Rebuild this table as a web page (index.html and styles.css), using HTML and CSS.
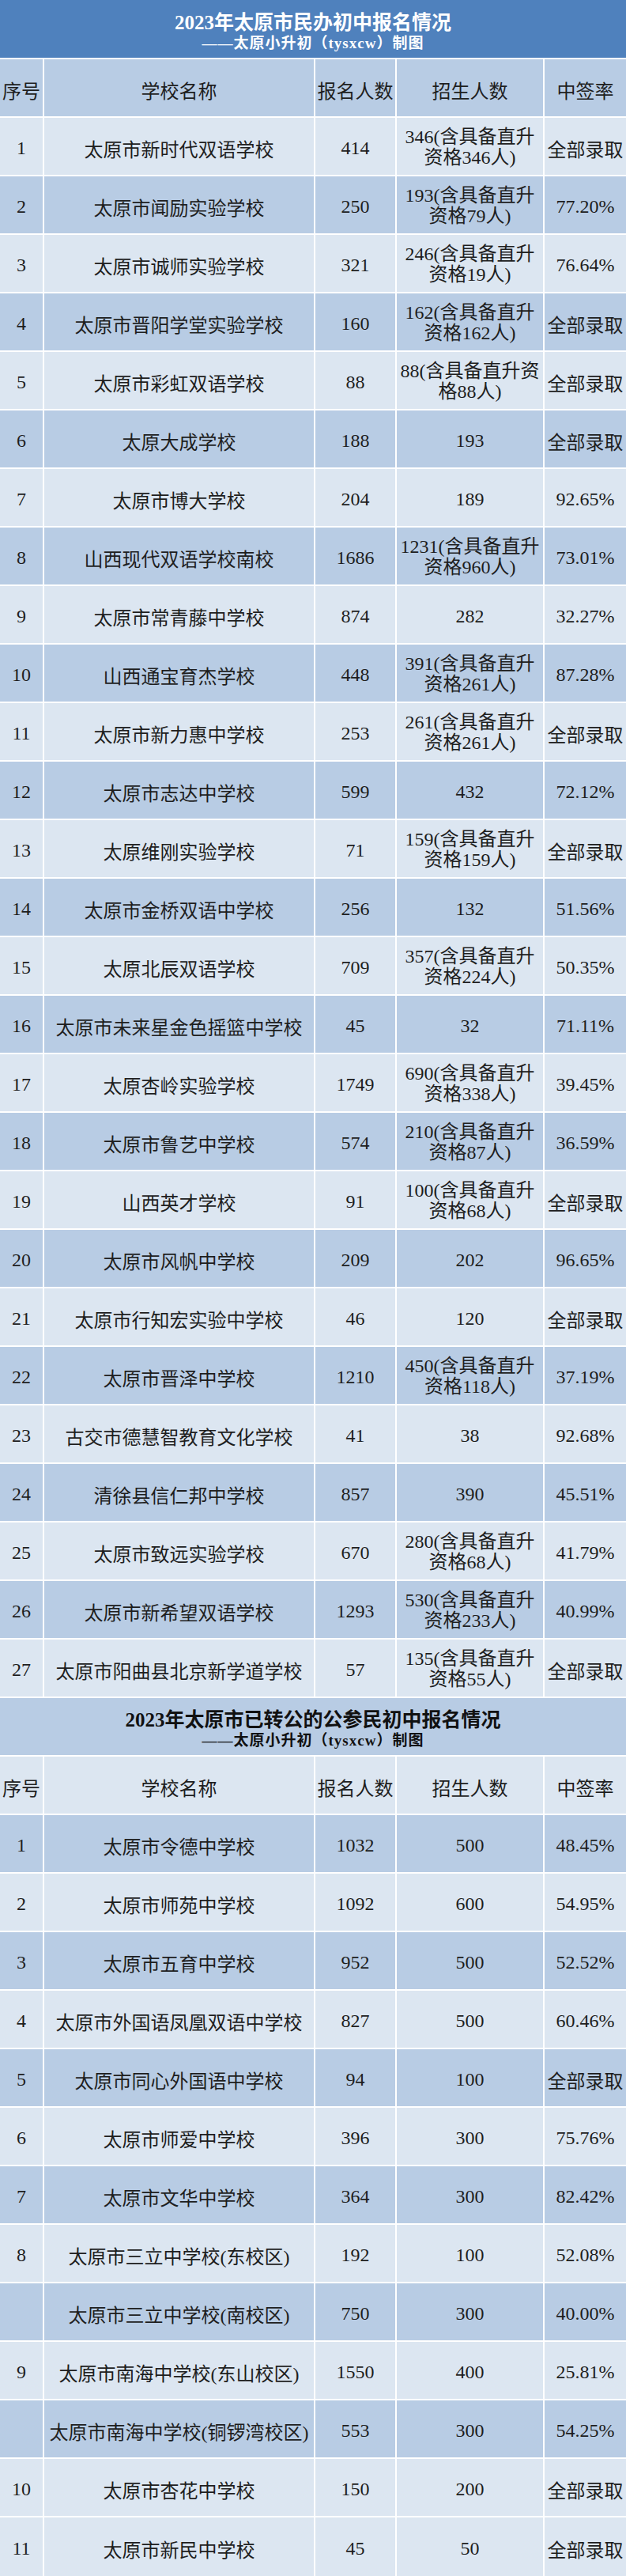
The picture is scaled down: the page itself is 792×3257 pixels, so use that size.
FILE: index.html
```html
<!DOCTYPE html>
<html lang="zh-CN">
<head>
<meta charset="utf-8">
<title>2023年太原市民办初中报名情况</title>
<link rel="stylesheet" href="styles.css">
</head>
<body>
<div class="page">
  <section class="sheet">
    <div class="title title--dark">
      <div class="title-main">2023年太原市民办初中报名情况</div>
      <div class="title-sub">——太原小升初（tysxcw）制图</div>
    </div>
    <div class="row row--dark head"><div>序号</div><div>学校名称</div><div>报名人数</div><div>招生人数</div><div>中签率</div></div>
    <div class="row row--light"><div>1</div><div>太原市新时代双语学校</div><div>414</div><div class="two">346(含具备直升<br>资格346人)</div><div>全部录取</div></div>
    <div class="row row--dark"><div>2</div><div>太原市闻励实验学校</div><div>250</div><div class="two">193(含具备直升<br>资格79人)</div><div>77.20%</div></div>
    <div class="row row--light"><div>3</div><div>太原市诚师实验学校</div><div>321</div><div class="two">246(含具备直升<br>资格19人)</div><div>76.64%</div></div>
    <div class="row row--dark"><div>4</div><div>太原市晋阳学堂实验学校</div><div>160</div><div class="two">162(含具备直升<br>资格162人)</div><div>全部录取</div></div>
    <div class="row row--light"><div>5</div><div>太原市彩虹双语学校</div><div>88</div><div class="two">88(含具备直升资<br>格88人)</div><div>全部录取</div></div>
    <div class="row row--dark"><div>6</div><div>太原大成学校</div><div>188</div><div>193</div><div>全部录取</div></div>
    <div class="row row--light"><div>7</div><div>太原市博大学校</div><div>204</div><div>189</div><div>92.65%</div></div>
    <div class="row row--dark"><div>8</div><div>山西现代双语学校南校</div><div>1686</div><div class="two">1231(含具备直升<br>资格960人)</div><div>73.01%</div></div>
    <div class="row row--light"><div>9</div><div>太原市常青藤中学校</div><div>874</div><div>282</div><div>32.27%</div></div>
    <div class="row row--dark"><div>10</div><div>山西通宝育杰学校</div><div>448</div><div class="two">391(含具备直升<br>资格261人)</div><div>87.28%</div></div>
    <div class="row row--light"><div>11</div><div>太原市新力惠中学校</div><div>253</div><div class="two">261(含具备直升<br>资格261人)</div><div>全部录取</div></div>
    <div class="row row--dark"><div>12</div><div>太原市志达中学校</div><div>599</div><div>432</div><div>72.12%</div></div>
    <div class="row row--light"><div>13</div><div>太原维刚实验学校</div><div>71</div><div class="two">159(含具备直升<br>资格159人)</div><div>全部录取</div></div>
    <div class="row row--dark"><div>14</div><div>太原市金桥双语中学校</div><div>256</div><div>132</div><div>51.56%</div></div>
    <div class="row row--light"><div>15</div><div>太原北辰双语学校</div><div>709</div><div class="two">357(含具备直升<br>资格224人)</div><div>50.35%</div></div>
    <div class="row row--dark"><div>16</div><div>太原市未来星金色摇篮中学校</div><div>45</div><div>32</div><div>71.11%</div></div>
    <div class="row row--light"><div>17</div><div>太原杏岭实验学校</div><div>1749</div><div class="two">690(含具备直升<br>资格338人)</div><div>39.45%</div></div>
    <div class="row row--dark"><div>18</div><div>太原市鲁艺中学校</div><div>574</div><div class="two">210(含具备直升<br>资格87人)</div><div>36.59%</div></div>
    <div class="row row--light"><div>19</div><div>山西英才学校</div><div>91</div><div class="two">100(含具备直升<br>资格68人)</div><div>全部录取</div></div>
    <div class="row row--dark"><div>20</div><div>太原市风帆中学校</div><div>209</div><div>202</div><div>96.65%</div></div>
    <div class="row row--light"><div>21</div><div>太原市行知宏实验中学校</div><div>46</div><div>120</div><div>全部录取</div></div>
    <div class="row row--dark"><div>22</div><div>太原市晋泽中学校</div><div>1210</div><div class="two">450(含具备直升<br>资格118人)</div><div>37.19%</div></div>
    <div class="row row--light"><div>23</div><div>古交市德慧智教育文化学校</div><div>41</div><div>38</div><div>92.68%</div></div>
    <div class="row row--dark"><div>24</div><div>清徐县信仁邦中学校</div><div>857</div><div>390</div><div>45.51%</div></div>
    <div class="row row--light"><div>25</div><div>太原市致远实验学校</div><div>670</div><div class="two">280(含具备直升<br>资格68人)</div><div>41.79%</div></div>
    <div class="row row--dark"><div>26</div><div>太原市新希望双语学校</div><div>1293</div><div class="two">530(含具备直升<br>资格233人)</div><div>40.99%</div></div>
    <div class="row row--light"><div>27</div><div>太原市阳曲县北京新学道学校</div><div>57</div><div class="two">135(含具备直升<br>资格55人)</div><div>全部录取</div></div>
  </section>
  <section class="sheet">
    <div class="title title--pale">
      <div class="title-main">2023年太原市已转公的公参民初中报名情况</div>
      <div class="title-sub">——太原小升初（tysxcw）制图</div>
    </div>
    <div class="row row--light head"><div>序号</div><div>学校名称</div><div>报名人数</div><div>招生人数</div><div>中签率</div></div>
    <div class="row row--dark"><div>1</div><div>太原市令德中学校</div><div>1032</div><div>500</div><div>48.45%</div></div>
    <div class="row row--light"><div>2</div><div>太原市师苑中学校</div><div>1092</div><div>600</div><div>54.95%</div></div>
    <div class="row row--dark"><div>3</div><div>太原市五育中学校</div><div>952</div><div>500</div><div>52.52%</div></div>
    <div class="row row--light"><div>4</div><div>太原市外国语凤凰双语中学校</div><div>827</div><div>500</div><div>60.46%</div></div>
    <div class="row row--dark"><div>5</div><div>太原市同心外国语中学校</div><div>94</div><div>100</div><div>全部录取</div></div>
    <div class="row row--light"><div>6</div><div>太原市师爱中学校</div><div>396</div><div>300</div><div>75.76%</div></div>
    <div class="row row--dark"><div>7</div><div>太原市文华中学校</div><div>364</div><div>300</div><div>82.42%</div></div>
    <div class="row row--light"><div>8</div><div>太原市三立中学校(东校区)</div><div>192</div><div>100</div><div>52.08%</div></div>
    <div class="row row--dark"><div></div><div>太原市三立中学校(南校区)</div><div>750</div><div>300</div><div>40.00%</div></div>
    <div class="row row--light"><div>9</div><div>太原市南海中学校(东山校区)</div><div>1550</div><div>400</div><div>25.81%</div></div>
    <div class="row row--dark"><div></div><div>太原市南海中学校(铜锣湾校区)</div><div>553</div><div>300</div><div>54.25%</div></div>
    <div class="row row--light"><div>10</div><div>太原市杏花中学校</div><div>150</div><div>200</div><div>全部录取</div></div>
    <div class="row row--light row--last"><div>11</div><div>太原市新民中学校</div><div>45</div><div>50</div><div>全部录取</div></div>
  </section>
</div>
</body>
</html>
```
FILE: styles.css
```css
html, body {
  margin: 0;
  padding: 0;
  background: #ffffff;
}

body {
  font-family: "Liberation Serif", "Noto Sans CJK SC", serif;
  color: #1e1e1e;
}

.page {
  display: flex;
  flex-direction: column;
  gap: 2px;
  width: 792px;
  background: #ffffff;
}

.sheet {
  display: flex;
  flex-direction: column;
  gap: 2px;
}

.title {
  height: 72px;
  display: flex;
  flex-direction: column;
  align-items: center;
  justify-content: center;
  padding-top: 8px;
  box-sizing: border-box;
  text-align: center;
}

.sheet:first-child .title {
  height: 73px;
}

.title--dark {
  background: #4f81bd;
  color: #ffffff;
}

.title--pale {
  background: #b8cce4;
  color: #111111;
}

.title-main {
  font-size: 25px;
  line-height: 27px;
  font-weight: bold;
}

.title-sub {
  font-size: 19px;
  line-height: 25px;
  font-weight: bold;
  letter-spacing: 1px;
}

.row {
  display: grid;
  grid-template-columns: 54px 341px 101px 185px 103px;
  column-gap: 2px;
  height: 72px;
  font-size: 24px;
}

.row--last {
  height: 74px;
}

.row > div {
  display: flex;
  align-items: center;
  justify-content: center;
  text-align: center;
  padding-top: 4px;
  box-sizing: border-box;
  white-space: nowrap;
}

.row > div.two {
  line-height: 26px;
  padding-top: 2px;
}

.row--light > div {
  background: #dce6f1;
}

.row--dark > div {
  background: #b8cce4;
}
```
